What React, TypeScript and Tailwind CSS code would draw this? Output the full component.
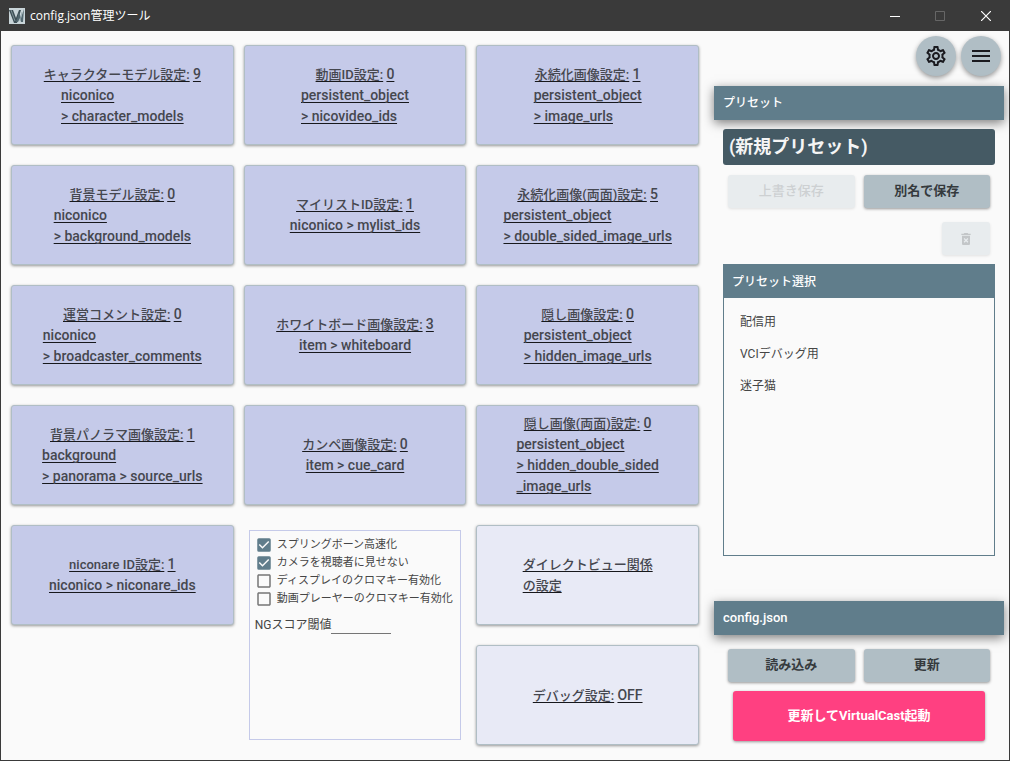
import { useState } from "react";
import type { ReactNode } from "react";
import {
  MdCheckBox,
  MdCheckBoxOutlineBlank,
  MdDeleteForever,
  MdMenu,
  MdOutlineSettings,
} from "react-icons/md";

type Setting = { title: string; value?: string; path?: string[]; light?: boolean };

const columns: { start: string; items: Setting[] }[] = [
  {
    start: "left",
    items: [
      { title: "キャラクターモデル設定:", value: "9", path: ["niconico", "> character_models"] },
      { title: "背景モデル設定:", value: "0", path: ["niconico", "> background_models"] },
      { title: "運営コメント設定:", value: "0", path: ["niconico", "> broadcaster_comments"] },
      { title: "背景パノラマ画像設定:", value: "1", path: ["background", "> panorama > source_urls"] },
      { title: "niconare ID設定:", value: "1", path: ["niconico > niconare_ids"] },
    ],
  },
  {
    start: "middle",
    items: [
      { title: "動画ID設定:", value: "0", path: ["persistent_object", "> nicovideo_ids"] },
      { title: "マイリストID設定:", value: "1", path: ["niconico > mylist_ids"] },
      { title: "ホワイトボード画像設定:", value: "3", path: ["item > whiteboard"] },
      { title: "カンペ画像設定:", value: "0", path: ["item > cue_card"] },
    ],
  },
  {
    start: "right",
    items: [
      { title: "永続化画像設定:", value: "1", path: ["persistent_object", "> image_urls"] },
      { title: "永続化画像(両面)設定:", value: "5", path: ["persistent_object", "> double_sided_image_urls"] },
      { title: "隠し画像設定:", value: "0", path: ["persistent_object", "> hidden_image_urls"] },
      {
        title: "隠し画像(両面)設定:",
        value: "0",
        path: ["persistent_object", "> hidden_double_sided", "_image_urls"],
      },
      { title: "ダイレクトビュー関係\nの設定", light: true },
      { title: "デバッグ設定:", value: "OFF", light: true },
    ],
  },
];

const presets = ["配信用", "VCIデバッグ用", "迷子猫"];

function SettingCard({ title, value, path, light }: Setting) {
  return (
    <button
      type="button"
      className={`flex h-[100px] w-full flex-col items-center justify-center rounded-[3px] border border-[#b0bec5] text-sm leading-[21px] font-medium text-[#45474f] shadow-[0_1px_3px_rgba(0,0,0,0.4)] ${
        light ? "bg-[#e8eaf6]" : "bg-[#c5cae9]"
      }`}
    >
      <span className="text-left text-[13px] leading-[21px] whitespace-pre">
        <span className="underline decoration-[#17181c] decoration-1 underline-offset-2 [text-decoration-skip-ink:none]">
          {title}
        </span>
        {value && (
          <>
            {" "}
            <span className="text-sm leading-[21px] underline decoration-[#17181c] decoration-1 underline-offset-2 [text-decoration-skip-ink:none]">
              {value}
            </span>
          </>
        )}
      </span>
      {path && (
        <span className="text-left">
          {path.map((line) => (
            <span
              key={line}
              className="block underline decoration-[#17181c] decoration-1 underline-offset-2 [text-decoration-skip-ink:none]"
            >
              {line}
            </span>
          ))}
        </span>
      )}
    </button>
  );
}

function CheckRow({ label, initial = false }: { label: string; initial?: boolean }) {
  const [checked, setChecked] = useState(initial);
  return (
    <label className="flex h-[18px] items-center gap-1 whitespace-nowrap">
      <span className="relative size-[18px] shrink-0">
        {checked ? (
          <MdCheckBox className="size-[18px] text-[#607d8b]" />
        ) : (
          <MdCheckBoxOutlineBlank className="size-[18px] text-[#757575]" />
        )}
        <input
          type="checkbox"
          className="absolute inset-0 size-full appearance-none"
          checked={checked}
          onChange={(e) => setChecked(e.target.checked)}
        />
      </span>
      {label}
    </label>
  );
}

function ScoreOptions() {
  return (
    <div className="mx-[5px] mt-[5px] flex h-[210px] flex-col border border-[#c5cae9] px-[5px] pt-[5px] text-[11px] text-[#454545]">
      <CheckRow label="スプリングボーン高速化" initial />
      <CheckRow label="カメラを視聴者に見せない" initial />
      <CheckRow label="ディスプレイのクロマキー有効化" />
      <CheckRow label="動画プレーヤーのクロマキー有効化" />
      <label className="mt-2 flex h-[18px] items-center text-xs">
        NGスコア閾値
        <input type="text" className="h-[18px] w-[60px] border-b border-[#757575] bg-transparent outline-none" />
      </label>
    </div>
  );
}

function SectionHeader({ children }: { children: ReactNode }) {
  return (
    <h2 className="flex h-[34px] items-center bg-[#607d8b] px-[9px] text-[13px] font-medium text-white shadow-[0_3px_10px_rgba(0,0,0,0.5)]">
      {children}
    </h2>
  );
}

function ActionButton({ children, disabled = false }: { children: ReactNode; disabled?: boolean }) {
  return (
    <button
      type="button"
      disabled={disabled}
      className="h-[33px] flex-1 rounded-[3px] bg-[#b0bec5] pb-0.5 text-[13px] font-bold text-[#353a3d] shadow-[0_1px_3px_rgba(0,0,0,0.4)] disabled:bg-[#e8ecee] disabled:font-medium disabled:text-[#cdd0d2] disabled:shadow-[0_1px_3px_rgba(0,0,0,0.1)]"
    >
      {children}
    </button>
  );
}

function TitleBar() {
  return (
    <header className="flex h-[31px] shrink-0 items-center bg-[#3a3a3a] px-[9px] pr-0 font-['Open_Sans','Noto_Sans_CJK_JP',sans-serif] text-xs text-white">
      <svg viewBox="0 0 16 16" className="mr-[5px] size-4" aria-hidden="true">
        <rect width="16" height="16" fill="#c9d5d9" />
        <path d="M0 2h4l3 8 3-8h2L8 15H5z" fill="#3d4e55" />
        <path d="M7 14 10 4l2 6 3-9-1 13h-2l-1-4-2 4z" fill="#52676f" />
        <path d="M2 2l4 11M13 4l-2 9" stroke="#8fa3aa" strokeWidth="0.8" />
      </svg>
      <h1>config.json管理ツール</h1>
      <div className="ml-auto flex h-full pr-px">
        <button type="button" aria-label="最小化" className="flex w-[45px] items-center justify-center">
          <svg viewBox="0 0 10 10" className="size-2.5" shapeRendering="crispEdges">
            <path d="M0 5.5h10" stroke="#fff" />
          </svg>
        </button>
        <button type="button" aria-label="最大化" disabled className="flex w-[45px] items-center justify-center">
          <svg viewBox="0 0 10 10" className="size-2.5">
            <path d="M.5.5h9v9h-9z" stroke="#666" fill="none" />
          </svg>
        </button>
        <button type="button" aria-label="閉じる" className="flex w-[47px] items-center justify-center">
          <svg viewBox="0 0 10 10" className="size-2.5">
            <path d="M0 0l10 10M10 0L0 10" stroke="#fff" strokeWidth="1.2" />
          </svg>
        </button>
      </div>
    </header>
  );
}

const roundButton =
  "flex size-10 items-center justify-center rounded-full bg-[#b0bec5] text-[#1a1a1f] shadow-[0_2px_5px_rgba(0,0,0,0.4)]";

function Sidebar() {
  return (
    <aside className="flex w-[290px] shrink-0 flex-col pt-[5px]">
      <div className="mr-[3px] flex justify-end gap-[5px]">
        <button type="button" aria-label="設定" className={roundButton}>
          <MdOutlineSettings className="size-6" />
        </button>
        <button type="button" aria-label="メニュー" className={roundButton}>
          <MdMenu className="size-6" />
        </button>
      </div>

      <section className="mt-2.5">
        <SectionHeader>
          <span className="text-xs">プリセット</span>
        </SectionHeader>
        <div className="px-[9px] pt-[9px]">
          <p className="flex h-9 items-center rounded-[3px] bg-[#455a64] px-1.5 text-lg font-bold text-[#f5f5f5]">
            (新規プリセット)
          </p>
          <div className="mt-2.5 flex gap-[9px] px-[5px]">
            <ActionButton disabled>上書き保存</ActionButton>
            <ActionButton>別名で保存</ActionButton>
          </div>
          <div className="mt-3.5 flex justify-end px-[5px]">
            <button
              type="button"
              disabled
              aria-label="プリセットを削除"
              className="flex h-[33px] w-12 items-center justify-center rounded-[3px] bg-[#e8ecee] text-[#c3c6c8] shadow-[0_1px_3px_rgba(0,0,0,0.1)]"
            >
              <MdDeleteForever className="size-4" />
            </button>
          </div>
          <div className="mt-[9px] h-[292px] border border-[#607d8b]">
            <h3 className="flex h-[33px] items-center bg-[#607d8b] px-2 text-xs font-medium text-white">
              プリセット選択
            </h3>
            <ul className="px-4 pt-2 text-xs text-[#454545]">
              {presets.map((preset) => (
                <li key={preset} className="flex h-8 items-center">
                  {preset}
                </li>
              ))}
            </ul>
          </div>
        </div>
      </section>

      <section className="mt-[45px]">
        <SectionHeader>config.json</SectionHeader>
        <div className="flex gap-[9px] px-3.5 pt-3.5">
          <ActionButton>読み込み</ActionButton>
          <ActionButton>更新</ActionButton>
        </div>
        <div className="flex px-[19px] pt-[9px]">
          <button
            type="button"
            className="h-[50px] flex-1 rounded-[3px] bg-[#ff4081] text-[13px] font-bold text-white shadow-[0_1px_3px_rgba(0,0,0,0.4)]"
          >
            更新してVirtualCast起動
          </button>
        </div>
      </section>
    </aside>
  );
}

export default function App() {
  return (
    <div className="flex min-h-screen flex-col bg-[#3a3a3a] font-[Roboto,'Noto_Sans_CJK_JP',sans-serif]">
      <TitleBar />
      <div className="mx-px mb-px flex flex-1 bg-[#fafafa] pr-[5px] pl-2.5">
        <main className="mr-[15px] grid flex-1 grid-cols-3 gap-2.5 pt-3.5">
          {columns.map(({ start, items }) => (
            <div key={start} className="flex flex-col gap-5">
              {items.map((item) => (
                <SettingCard key={item.title} {...item} />
              ))}
              {start === "middle" && <ScoreOptions />}
            </div>
          ))}
        </main>
        <Sidebar />
      </div>
    </div>
  );
}
